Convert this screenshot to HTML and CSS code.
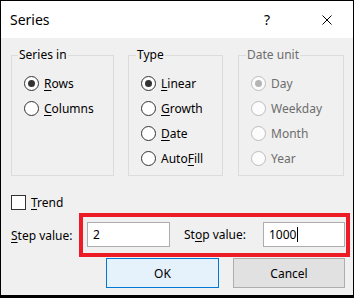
FILE: index.html
```html
<!DOCTYPE html>
<html>
<head>
<meta charset="utf-8">
<link rel="stylesheet" href="styles.css">
</head>
<body>
<div class="window">
  <div class="titlebar">
    <span class="title">Series</span>
    <span class="cap-btn help">?</span>
    <span class="cap-btn close"><svg width="10" height="10" viewBox="0 0 10 10"><path d="M0.5 0.5L9.5 9.5M9.5 0.5L0.5 9.5" stroke="#000" stroke-width="1" fill="none"/></svg></span>
  </div>
  <div class="content">
    <div class="groups">
      <fieldset class="group g-series">
        <legend>Series in</legend>
        <div class="radio on"><span class="circle"></span><span><u>R</u>ows</span></div>
        <div class="radio"><span class="circle"></span><span><u>C</u>olumns</span></div>
      </fieldset>
      <fieldset class="group g-type">
        <legend>Type</legend>
        <div class="radio on"><span class="circle"></span><span><u>L</u>inear</span></div>
        <div class="radio"><span class="circle"></span><span><u>G</u>rowth</span></div>
        <div class="radio"><span class="circle"></span><span><u>D</u>ate</span></div>
        <div class="radio"><span class="circle"></span><span>Auto<u>F</u>ill</span></div>
      </fieldset>
      <fieldset class="group g-date disabled">
        <legend>Date unit</legend>
        <div class="radio on"><span class="circle"></span><span>Day</span></div>
        <div class="radio"><span class="circle"></span><span>Weekday</span></div>
        <div class="radio"><span class="circle"></span><span>Month</span></div>
        <div class="radio"><span class="circle"></span><span>Year</span></div>
      </fieldset>
    </div>
    <div class="trend"><span class="checkbox"></span><span><u>T</u>rend</span></div>
    <div class="values">
      <span class="step-lbl"><u>S</u>tep value:</span>
      <div class="highlight">
        <div class="input step-in">2</div>
        <span class="stop-lbl">St<u>o</u>p value:</span>
        <div class="input stop-in">1000<span class="caret"></span></div>
      </div>
    </div>
    <div class="buttons">
      <div class="btn ok">OK</div>
      <div class="btn cancel">Cancel</div>
    </div>
  </div>
</div>
</body>
</html>
```
FILE: styles.css
```css
* { box-sizing: border-box; }
html, body { margin: 0; padding: 0; }
body {
  font-family: "Noto Sans", "DejaVu Sans", sans-serif;
  font-size: 12px;
  color: #000;
  background: #fff;
}
.window {
  width: 354px;
  height: 298px;
  border: 1px solid #000;
  border-bottom-width: 3px;
  background: #f0f0f0;
  display: flex;
  flex-direction: column;
  overflow: hidden;
}
.titlebar {
  height: 37px;
  background: #fff;
  display: flex;
  align-items: center;
  flex-shrink: 0;
}
.title {
  flex: 1;
  padding-left: 9px;
  font-size: 14px;
}
.cap-btn {
  width: 46px;
  height: 37px;
  display: flex;
  align-items: center;
  justify-content: center;
}
.help {
  font-size: 14px;
  margin-right: 14px;
}
.close { margin-right: 3px; }

.content {
  padding: 9px 0 0 10px;
}
.groups { display: flex; }
.group {
  margin: 0;
  border: 1px solid #dcdcdc;
  padding: 8px 0 0 6px;
  height: 129px;
  min-width: 0;
  flex-shrink: 0;
}
.group legend {
  padding: 0 1px;
  line-height: 16px;
}
.g-series { width: 103px; }
.g-type { width: 95px; margin-left: 14px; padding-left: 7px; }
.g-date { width: 106px; margin-left: 15px; padding-left: 7px; }

.radio {
  display: flex;
  align-items: center;
  height: 25px;
}
.circle {
  width: 15px;
  height: 15px;
  border: 1px solid #333;
  border-radius: 50%;
  background: #fff;
  margin-left: 6px;
  margin-right: 5px;
  display: flex;
  align-items: center;
  justify-content: center;
  flex-shrink: 0;
}
.g-type .circle, .g-date .circle { margin-left: 5px; }
.radio.on .circle::after {
  content: "";
  width: 7px;
  height: 7px;
  border-radius: 50%;
  background: #333;
}
.disabled legend, .disabled .radio { color: #6d6d6d; }
.disabled .circle { border-color: #bcbcbc; background: #fcfcfc; }
.disabled .radio.on .circle::after { background: #b4b4b4; }

u { text-decoration: underline; text-underline-offset: 2px; }

.trend {
  display: flex;
  align-items: center;
  height: 22px;
  margin-top: 15px;
}
.checkbox {
  width: 15px;
  height: 15px;
  border: 1px solid #333;
  background: #fff;
  margin-right: 5px;
}

.values {
  display: flex;
  align-items: center;
}
.step-lbl { width: 68px; flex-shrink: 0; }
.highlight {
  display: flex;
  align-items: center;
  width: 271px;
  flex-shrink: 0;
  border: 4px solid #ed1c24;
  padding: 5px 1px 6px 4px;
}
.input {
  height: 25px;
  border: 1px solid #adadad;
  background: #fff;
  padding-left: 5px;
  display: flex;
  align-items: center;
  flex-shrink: 0;
}
.step-in { width: 83px; }
.stop-lbl { margin-left: 14px; width: 79px; flex-shrink: 0; }
.stop-in { width: 82px; }
.caret {
  width: 1px;
  height: 15px;
  background: #000;
  margin-left: 1px;
}

.buttons {
  display: flex;
  justify-content: flex-end;
  gap: 14px;
  margin-top: 1px;
  padding-right: 8px;
}
.btn {
  height: 30px;
  display: flex;
  align-items: center;
  justify-content: center;
  border: 1px solid;
}
.ok { width: 113px; background: #e5f1fb; border-color: #0078d7; }
.cancel { width: 112px; background: #e1e1e1; border-color: #adadad; }
```
